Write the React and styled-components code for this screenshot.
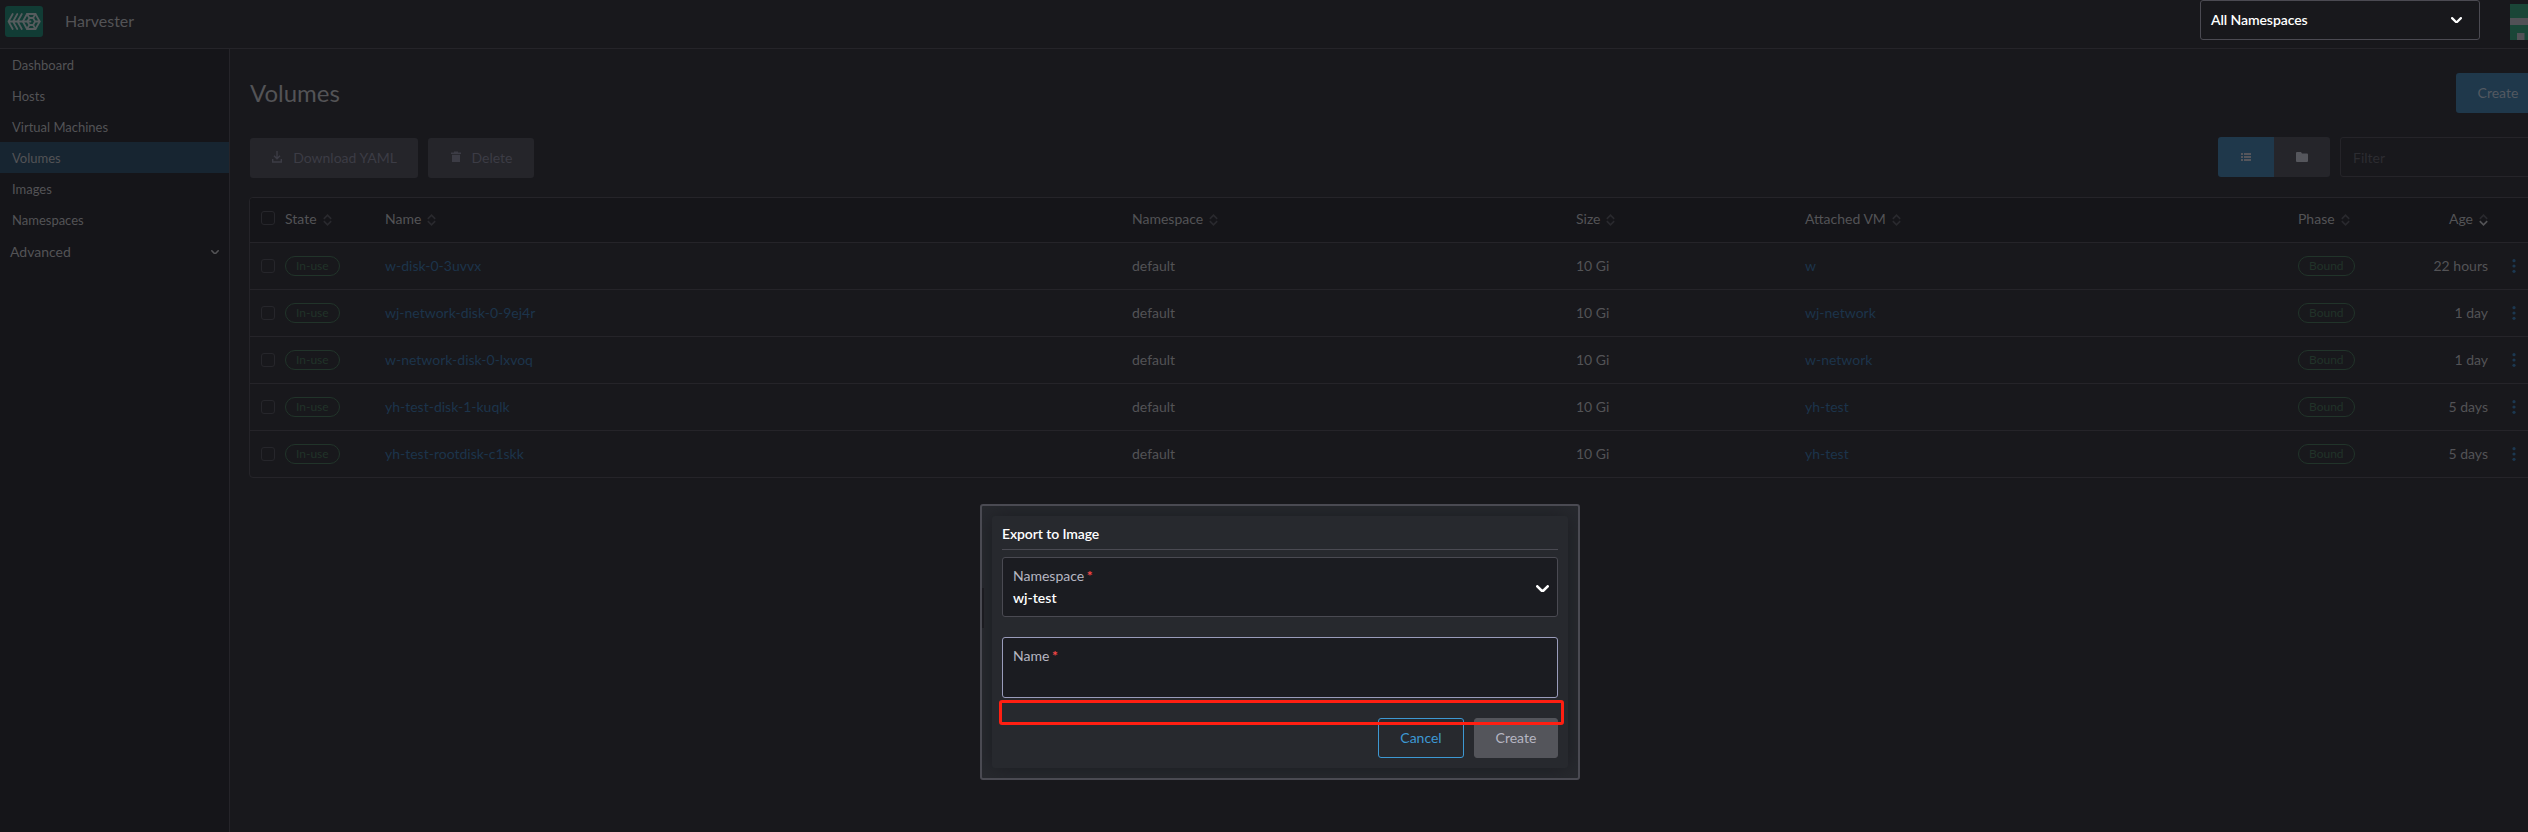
import React from "react";
import styled, { createGlobalStyle, css } from "styled-components";

const Global = createGlobalStyle`
  *, *::before, *::after { box-sizing: border-box; }
  html, body { margin: 0; background: #18181c; }
  body {
    width: 100vw;
    height: 100vh;
    overflow: hidden;
    color: #535356;
    font: 14px/20px Lato, "Liberation Sans", sans-serif;
  }
`;

const Page = styled.div`
  position: relative;
  display: flex;
  flex-direction: column;
  width: 2560px;
  height: 832px;
  background: #18181c;
`;

const Header = styled.header`
  display: flex;
  align-items: flex-start;
  height: 49px;
  padding-left: 5px;
  border-bottom: 1px solid #252429;
`;

const Logo = styled.svg`
  display: block;
  width: 38px;
  height: 31px;
  margin-top: 6px;
`;

const Product = styled.div`
  flex: 1;
  padding: 11px 0 0 22px;
  font-size: 16px;
`;

const NamespaceFilter = styled.div`
  display: flex;
  justify-content: space-between;
  align-items: center;
  width: 280px;
  height: 40px;
  padding: 0 17px 0 10px;
  border: 1px solid #4b4a52;
  border-radius: 3px;
  color: #fff;
  font-weight: 600;
  letter-spacing: -0.08px;
`;

const Avatar = styled.svg`
  display: block;
  width: 36px;
  height: 36px;
  margin: 4px 14px 0 30px;
`;

const Body = styled.div`
  display: flex;
  flex: 1;
`;

const Sidebar = styled.nav`
  width: 230px;
  border-right: 1px solid #252429;
  background: #151519;
`;

const NavItem = styled.div`
  height: 31px;
  padding: 6px 12px;
  font-size: 13px;
  ${(p) => p.$active && css`background: #172531;`}
`;

const NavGroup = styled.div`
  display: flex;
  justify-content: space-between;
  align-items: center;
  height: 33px;
  padding: 1px 10px 0 10px;
`;

const Main = styled.main`
  flex: 1;
  padding: 24px 20px 0;
`;

const TitleRow = styled.div`
  display: flex;
  justify-content: space-between;
  height: 40px;
`;

const Title = styled.h1`
  margin: 5px 0 0;
  font-size: 24px;
  font-weight: 400;
  line-height: 30px;
`;

const Toolbar = styled.div`
  display: flex;
  gap: 10px;
  margin-top: 24px;
  height: 41px;
`;

const Spacer = styled.div`
  flex: 1;
`;

const Button = styled.div`
  display: flex;
  align-items: center;
  justify-content: center;
  flex: none;
  width: ${(p) => p.$w}px;
  height: 40px;
  margin-top: ${(p) => p.$top || 0}px;
  border-radius: 3px;
  background: ${(p) => (p.$primary ? "#1f384b" : "#25252a")};
  color: ${(p) => (p.$primary ? "#535961" : "#3c3c45")};
  svg { margin: -3px 11px 0 1px; }
`;

const Toggle = styled.div`
  display: flex;
  width: 112px;
  height: 40px;
  overflow: hidden;
  border-radius: 3px;
`;

const ToggleHalf = styled.div`
  display: flex;
  flex: 1;
  align-items: center;
  justify-content: center;
  background: ${(p) => (p.$active ? "#1f384b" : "#25252a")};
  color: #55565c;
`;

const FilterBox = styled.div`
  width: 200px;
  height: 40px;
  padding: 10px 12px;
  border: 1px solid #252429;
  border-radius: 3px;
  color: #2c2c31;
`;

const Table = styled.div`
  width: 2291px;
  margin: 19px 0 0 -1px;
  border: 1px solid #252429;
  border-radius: 4px;
  overflow: hidden;
`;

const Row = styled.div`
  display: grid;
  grid-template-columns: 24px 100px 747px 444px 229px 493px 90px 100px 52px;
  align-items: center;
  height: 47px;
  padding-left: 11px;
  border-bottom: 1px solid #252429;
  ${(p) => p.$head && css`
    height: 45px;
    padding-bottom: 2px;
    background: #151519;
  `}
  &:last-child { height: 46px; border-bottom: 0; }
`;

const Cell = styled.div`
  display: flex;
  align-items: center;
  justify-content: ${(p) => (p.$right ? "flex-end" : "flex-start")};
  gap: 6px;
  color: ${(p) => (p.$link ? "#1c344b" : "inherit")};
  svg { margin-top: 1px; }
`;

const Check = styled.div`
  width: 14px;
  height: 14px;
  margin-top: ${(p) => (p.$head ? -2 : 0)}px;
  border: 1px solid #26262b;
  border-radius: 3px;
`;

const Badge = styled.span`
  height: 20px;
  padding: 0 10px;
  border: 1px solid #21342a;
  border-radius: 10px;
  color: #213329;
  font-size: 12px;
  line-height: 18px;
`;

const Dots = styled.svg`
  display: block;
  width: 4px;
  height: 14px;
  margin-left: 24px;
  fill: #1c3850;
`;

const Modal = styled.div`
  position: absolute;
  left: 980px;
  top: 504px;
  width: 600px;
  height: 276px;
  padding: 10px;
  overflow: hidden;
  border: 2px solid #4a4a52;
  border-radius: 3px;
  background: #27292e;
`;

const Card = styled.div`
  height: 252px;
  padding: 8px 10px 0;
  border-radius: 3px;
  background: #27292e;
  box-shadow: 0 0 20px #1b1c21;
`;

const ModalTitle = styled.div`
  height: 26px;
  border-bottom: 1px solid #4a4a52;
  color: #fff;
  font-weight: 600;
  letter-spacing: -0.1px;
`;

const Field = styled.div`
  display: flex;
  align-items: center;
  justify-content: space-between;
  height: ${(p) => p.$h}px;
  margin-top: ${(p) => p.$top}px;
  padding: 0 8px 0 10px;
  border: 1px solid ${(p) => (p.$focus ? "#9a9cbb" : "#4a4a52")};
  border-radius: 3px;
  background: #1b1c21;
  color: #b6b6c2;
  svg { margin-top: 3px; }
`;

const FieldText = styled.div`
  height: 100%;
  padding-top: 8px;
`;

const Value = styled.div`
  margin-top: 2px;
  color: #fff;
  font-weight: 600;
`;

const Star = styled.span`
  margin-left: -1px;
  color: #f64747;
  font-weight: 700;
`;

const Actions = styled.div`
  display: flex;
  justify-content: flex-end;
  gap: 10px;
  margin-top: 20px;
`;

const ModalButton = styled.div`
  width: ${(p) => p.$w}px;
  height: 40px;
  border: 1px solid ${(p) => (p.$outline ? "#3d98d3" : "#54555b")};
  border-radius: 3px;
  background: ${(p) => (p.$outline ? "transparent" : "#54555b")};
  color: ${(p) => (p.$outline ? "#3d98d3" : "#b6b6c2")};
  line-height: 38px;
  text-align: center;
`;

const EdgeMark = styled.div`
  position: absolute;
  left: 0;
  top: 82px;
  width: 2px;
  height: 40px;
  background: #1b1b20;
`;

const Highlight = styled.div`
  position: absolute;
  left: 17px;
  top: 194px;
  width: 565px;
  height: 25px;
  border: 3px solid #ff1f12;
  border-radius: 3px;
`;

const Chevron = ({ w, stroke, color }) => (
  <svg width={w} height={w * 0.6} viewBox="0 0 10 6" fill="none" stroke={color} strokeWidth={stroke} strokeLinecap="round" strokeLinejoin="round">
    <path d="M1 1l4 4 4-4" />
  </svg>
);

const Sort = ({ down }) => (
  <svg width="9" height="12" viewBox="0 0 9 12" fill="none" stroke="#29292e" strokeWidth="1.7">
    <path d="M.8 4.800L4.500 1.200l3.700 3.600" />
    <path d="M.8 7.200l3.700 3.600 3.700-3.600" stroke={down ? "#535356" : "#29292e"} />
  </svg>
);

const columns = ["State", "Name", "Namespace", "Size", "Attached VM", "Phase"];
const volumes = [
  ["w-disk-0-3uvvx", "w", "22 hours"],
  ["wj-network-disk-0-9ej4r", "wj-network", "1 day"],
  ["w-network-disk-0-lxvoq", "w-network", "1 day"],
  ["yh-test-disk-1-kuqlk", "yh-test", "5 days"],
  ["yh-test-rootdisk-c1skk", "yh-test", "5 days"],
];
const nav = ["Dashboard", "Hosts", "Virtual Machines", "Volumes", "Images", "Namespaces"];

export default function App() {
  return (
    <Page>
      <Global />
      <Header>
        <Logo viewBox="0 0 38 31">
          <rect width="38" height="31" rx="3" fill="#113c35" />
          <g fill="none" stroke="#565c5e" strokeWidth="1.8" strokeLinejoin="round" strokeLinecap="round">
            <path d="M3.500 15.500h22M7.700 8l-4.200 7.500 4.200 7.500M12.300 8l-4.200 7.500 4.200 7.500M16.800 8l-4.200 7.500 4.200 7.500" />
            <path d="M22 8h8.500l4.200 7.500-4.200 7.500H22l-4.200-7.500z" />
            <path d="M24.400 12h3.700l2 3.500-2 3.500h-3.700l-2-3.500zM22 8l2.400 4M30.500 8l-2.400 4M34.500 15.500h-4.400M30.500 23l-2.400-4M22 23l2.400-4" />
          </g>
        </Logo>
        <Product>Harvester</Product>
        <NamespaceFilter>
          All Namespaces
          <Chevron w={11} stroke={2} color="#fff" />
        </NamespaceFilter>
        <Avatar viewBox="0 0 36 36">
          <rect width="36" height="36" fill="#1a4637" />
          <path d="M0 14h36v7H0zM7 29h7.500v7H7z" fill="#525156" />
        </Avatar>
      </Header>
      <Body>
        <Sidebar>
          {nav.map((n) => (
            <NavItem key={n} $active={n === "Volumes"}>{n}</NavItem>
          ))}
          <NavGroup>
            Advanced
            <Chevron w={8} stroke={2} color="#535356" />
          </NavGroup>
        </Sidebar>
        <Main>
          <TitleRow>
            <Title>Volumes</Title>
            <Button $primary $w={84}>Create</Button>
          </TitleRow>
          <Toolbar>
            <Button $w={168} $top={1}>
              <svg width="10" height="12" viewBox="0 0 10 12" fill="none" stroke="currentColor" strokeWidth="1.400">
                <path d="M5 0v7.500M2 4.800l3 3 3-3M.7 8v3h8.600V8" />
              </svg>
              Download YAML
            </Button>
            <Button $w={106} $top={1}>
              <svg width="10" height="12" viewBox="0 0 10 12" fill="currentColor">
                <path d="M0 1.500h3V.5h4v1h3V3H0zM1 3.700h8V11H1z" />
              </svg>
              Delete
            </Button>
            <Spacer />
            <Toggle>
              <ToggleHalf $active>
                <svg width="10" height="8" viewBox="0 0 10 8" fill="currentColor">
                  <path d="M0 0h2v2H0zM3 0h7v2H3zM0 3h2v2H0zM3 3h7v2H3zM0 6h2v2H0zM3 6h7v2H3z" />
                </svg>
              </ToggleHalf>
              <ToggleHalf>
                <svg width="12" height="10" viewBox="0 0 12 10" fill="currentColor">
                  <path d="M1 0h4l1 1.500h5a1 1 0 0 1 1 1V9a1 1 0 0 1-1 1H1a1 1 0 0 1-1-1V1a1 1 0 0 1 1-1z" />
                </svg>
              </ToggleHalf>
            </Toggle>
            <FilterBox>Filter</FilterBox>
          </Toolbar>
          <Table>
            <Row $head>
              <Check $head />
              {columns.map((c) => (
                <Cell key={c}>{c}<Sort /></Cell>
              ))}
              <Cell $right>Age<Sort down /></Cell>
            </Row>
            {volumes.map(([name, vm, age]) => (
              <Row key={name}>
                <Check />
                <Cell><Badge>In-use</Badge></Cell>
                <Cell $link>{name}</Cell>
                <Cell>default</Cell>
                <Cell>10 Gi</Cell>
                <Cell $link>{vm}</Cell>
                <Cell><Badge>Bound</Badge></Cell>
                <Cell $right>{age}</Cell>
                <Dots viewBox="0 0 4 14">
                  <circle cx="2" cy="1.700" r="1.600" />
                  <circle cx="2" cy="7" r="1.600" />
                  <circle cx="2" cy="12.300" r="1.600" />
                </Dots>
              </Row>
            ))}
          </Table>
        </Main>
      </Body>
      <Modal>
        <Card>
          <ModalTitle>Export to Image</ModalTitle>
          <Field $h={60} $top={7}>
            <FieldText>
              Namespace <Star>*</Star>
              <Value>wj-test</Value>
            </FieldText>
            <Chevron w={13} stroke={2} color="#fff" />
          </Field>
          <Field $h={61} $top={20} $focus>
            <FieldText>Name <Star>*</Star></FieldText>
          </Field>
          <Actions>
            <ModalButton $w={86} $outline>Cancel</ModalButton>
            <ModalButton $w={84}>Create</ModalButton>
          </Actions>
        </Card>
        <EdgeMark />
        <Highlight />
      </Modal>
    </Page>
  );
}
